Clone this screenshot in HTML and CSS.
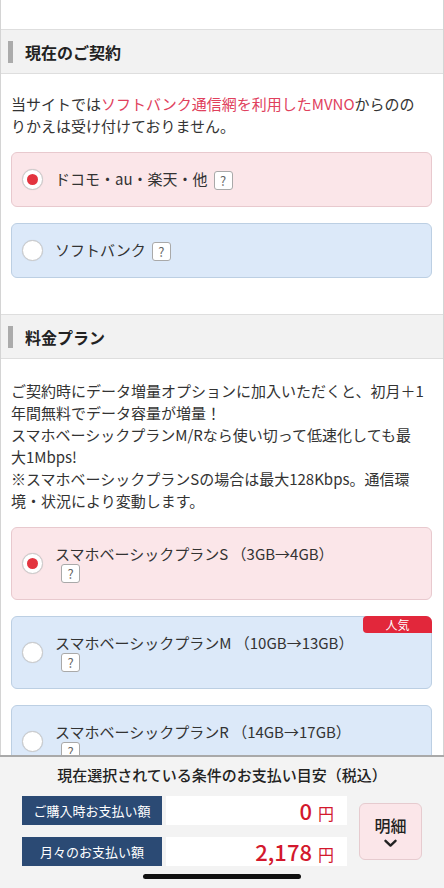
FILE: index.html
```html
<!DOCTYPE html>
<html lang="ja">
<head>
    <meta charset="UTF-8">
    <meta name="viewport" content="width=device-width, initial-scale=1.0">
    <title>お申し込み</title>
    <link rel="stylesheet" href="styles.css">
</head>
<body>

    <div class="page">
        <main class="content">

            <!-- 現在のご契約 -->
            <section class="section">
                <h2 class="section-title">現在のご契約</h2>
                <div class="section-body">
                    <p class="note">当サイトでは<span class="note-em">ソフトバンク通信網を利用したMVNO</span>からのの<br>りかえは受け付けておりません。</p>
                    <div class="options">
                        <label class="option option-on">
                            <span class="radio radio-checked"></span>
                            <span class="option-label">ドコモ・au・楽天・他<span class="help">?</span></span>
                        </label>
                        <label class="option">
                            <span class="radio"></span>
                            <span class="option-label">ソフトバンク<span class="help">?</span></span>
                        </label>
                    </div>
                </div>
            </section>

            <!-- 料金プラン -->
            <section class="section">
                <h2 class="section-title">料金プラン</h2>
                <div class="section-body section-body-plan">
                    <p class="note">ご契約時にデータ増量オプションに加入いただくと、初月＋1<br>年間無料でデータ容量が増量！<br>スマホベーシックプランM/Rなら使い切って低速化しても最<br>大1Mbps!<br>※スマホベーシックプランSの場合は最大128Kbps。通信環<br>境・状況により変動します。</p>
                    <div class="options">
                        <label class="option option-on">
                            <span class="radio radio-checked"></span>
                            <span class="option-label">スマホベーシックプランS （3GB→4GB）<span class="help help-block">?</span></span>
                        </label>
                        <label class="option">
                            <span class="badge">人気</span>
                            <span class="radio"></span>
                            <span class="option-label">スマホベーシックプランM （10GB→13GB）<span class="help help-block">?</span></span>
                        </label>
                        <label class="option">
                            <span class="radio"></span>
                            <span class="option-label">スマホベーシックプランR （14GB→17GB）<span class="help help-block">?</span></span>
                        </label>
                    </div>
                </div>
            </section>

        </main>

        <!-- お支払い目安 -->
        <footer class="summary">
            <p class="summary-title">現在選択されている条件のお支払い目安（税込）</p>
            <div class="summary-row">
                <div class="prices">
                    <div class="price-label">ご購入時お支払い額</div>
                    <div class="price-value"><span class="price-num">0</span><span class="price-yen">円</span></div>
                    <div class="price-label">月々のお支払い額</div>
                    <div class="price-value"><span class="price-num">2,178</span><span class="price-yen">円</span></div>
                </div>
                <button class="detail-btn" type="button">
                    <span>明細</span>
                    <svg width="13" height="9" viewBox="0 0 13 9"><path d="M1.5 1.8 L6.5 6.6 L11.5 1.8" fill="none" stroke="#222" stroke-width="2.4" stroke-linecap="round" stroke-linejoin="round"/></svg>
                </button>
            </div>
        </footer>

        <div class="home-bar"></div>
    </div>

</body>
</html>
```

FILE: styles.css
```css
body {
    margin: 0;
    padding: 0;
    font-family: "Noto Sans CJK JP", "Noto Sans", sans-serif;
    color: #333;
    background-color: #fff;
}

.page {
    position: relative;
    height: 888px;
    display: flex;
    flex-direction: column;
    overflow: hidden;
}

.content {
    flex: 1;
    overflow: hidden;
    padding-top: 29px;
    border-left: 1px solid #d4d4d4;
    border-right: 1px solid #d4d4d4;
}

.section-title {
    margin: 0;
    height: 43px;
    display: flex;
    align-items: center;
    padding-left: 7px;
    background-color: #f2f2f2;
    border-top: 1px solid #dedede;
    border-bottom: 1px solid #dedede;
    font-size: 16px;
    font-weight: 700;
    color: #222;
}

.section-title::before {
    content: "";
    width: 5px;
    height: 22px;
    margin-right: 12px;
    background-color: #ababab;
}

.section-body {
    padding: 19px 11px 36px 10px;
}

.section-body-plan {
    padding-top: 21px;
}

.note {
    margin: 0 0 15px;
    font-size: 15px;
    line-height: 22px;
    color: #333;
    white-space: nowrap;
}

.note-em {
    color: #e0415d;
}

.options {
    display: flex;
    flex-direction: column;
    gap: 16px;
}

.option {
    position: relative;
    display: flex;
    align-items: center;
    padding: 16px 10px;
    background-color: #dce9f9;
    border: 1px solid #bccfe3;
    border-radius: 6px;
}

.option-on {
    background-color: #fbe6e9;
    border-color: #e8c9ce;
}

.radio {
    flex: none;
    width: 19px;
    height: 19px;
    margin-right: 12px;
    border: 1px solid #c9c9c9;
    border-radius: 50%;
    background-color: #fff;
    display: flex;
    align-items: center;
    justify-content: center;
    box-shadow: 0 0 1px rgba(0, 0, 0, 0.15);
}

.radio-checked::after {
    content: "";
    width: 11px;
    height: 11px;
    border-radius: 50%;
    background-color: #e3343f;
}

.option-label {
    font-size: 15px;
    line-height: 20px;
    color: #333;
    white-space: nowrap;
}

.help {
    display: inline-block;
    vertical-align: middle;
    box-sizing: border-box;
    width: 19px;
    height: 19px;
    margin-left: 6px;
    margin-top: -2px;
    border: 1px solid #a9a9a9;
    border-radius: 3px;
    background-color: #fff;
    font-size: 13px;
    line-height: 17px;
    text-align: center;
    color: #666;
}

.help-block {
    display: block;
    margin-top: 0;
}

.badge {
    position: absolute;
    top: -1px;
    right: -1px;
    width: 69px;
    height: 17px;
    border-radius: 4px 6px 0 4px;
    background-color: #e2273b;
    color: #fff;
    font-size: 12px;
    line-height: 17px;
    text-align: center;
}

.summary {
    flex: none;
    box-sizing: border-box;
    height: 133px;
    padding: 7px 22px 0;
    background-color: #f3f3f3;
    border-top: 2px solid #a9a9a9;
}

.summary-title {
    margin: 0 0 10px;
    font-size: 15px;
    line-height: 22px;
    font-weight: 500;
    text-align: center;
    color: #222;
}

.summary-row {
    display: flex;
    align-items: center;
}

.prices {
    display: grid;
    grid-template-columns: 140px 181px;
    column-gap: 4px;
    row-gap: 12px;
}

.price-label {
    height: 29px;
    line-height: 29px;
    background-color: #2b4a74;
    color: #fff;
    font-size: 13px;
    text-align: center;
}

.price-value {
    height: 29px;
    line-height: 29px;
    padding-right: 13px;
    background-color: #fff;
    text-align: right;
    color: #d3182d;
}

.price-num {
    font-size: 22px;
    font-weight: 500;
}

.price-yen {
    margin-left: 6px;
    font-size: 16px;
}

.detail-btn {
    width: 63px;
    height: 57px;
    margin-left: 12px;
    padding: 0;
    display: flex;
    flex-direction: column;
    align-items: center;
    justify-content: center;
    gap: 4px;
    background-color: #fbe6e9;
    border: 1px solid #e6cbcf;
    border-radius: 6px;
    font-family: inherit;
    font-size: 16px;
    font-weight: 500;
    line-height: 20px;
    color: #222;
    cursor: pointer;
}

.home-bar {
    position: absolute;
    left: 50%;
    bottom: 9px;
    width: 158px;
    height: 5px;
    margin-left: -79px;
    border-radius: 3px;
    background-color: #111;
}
```
